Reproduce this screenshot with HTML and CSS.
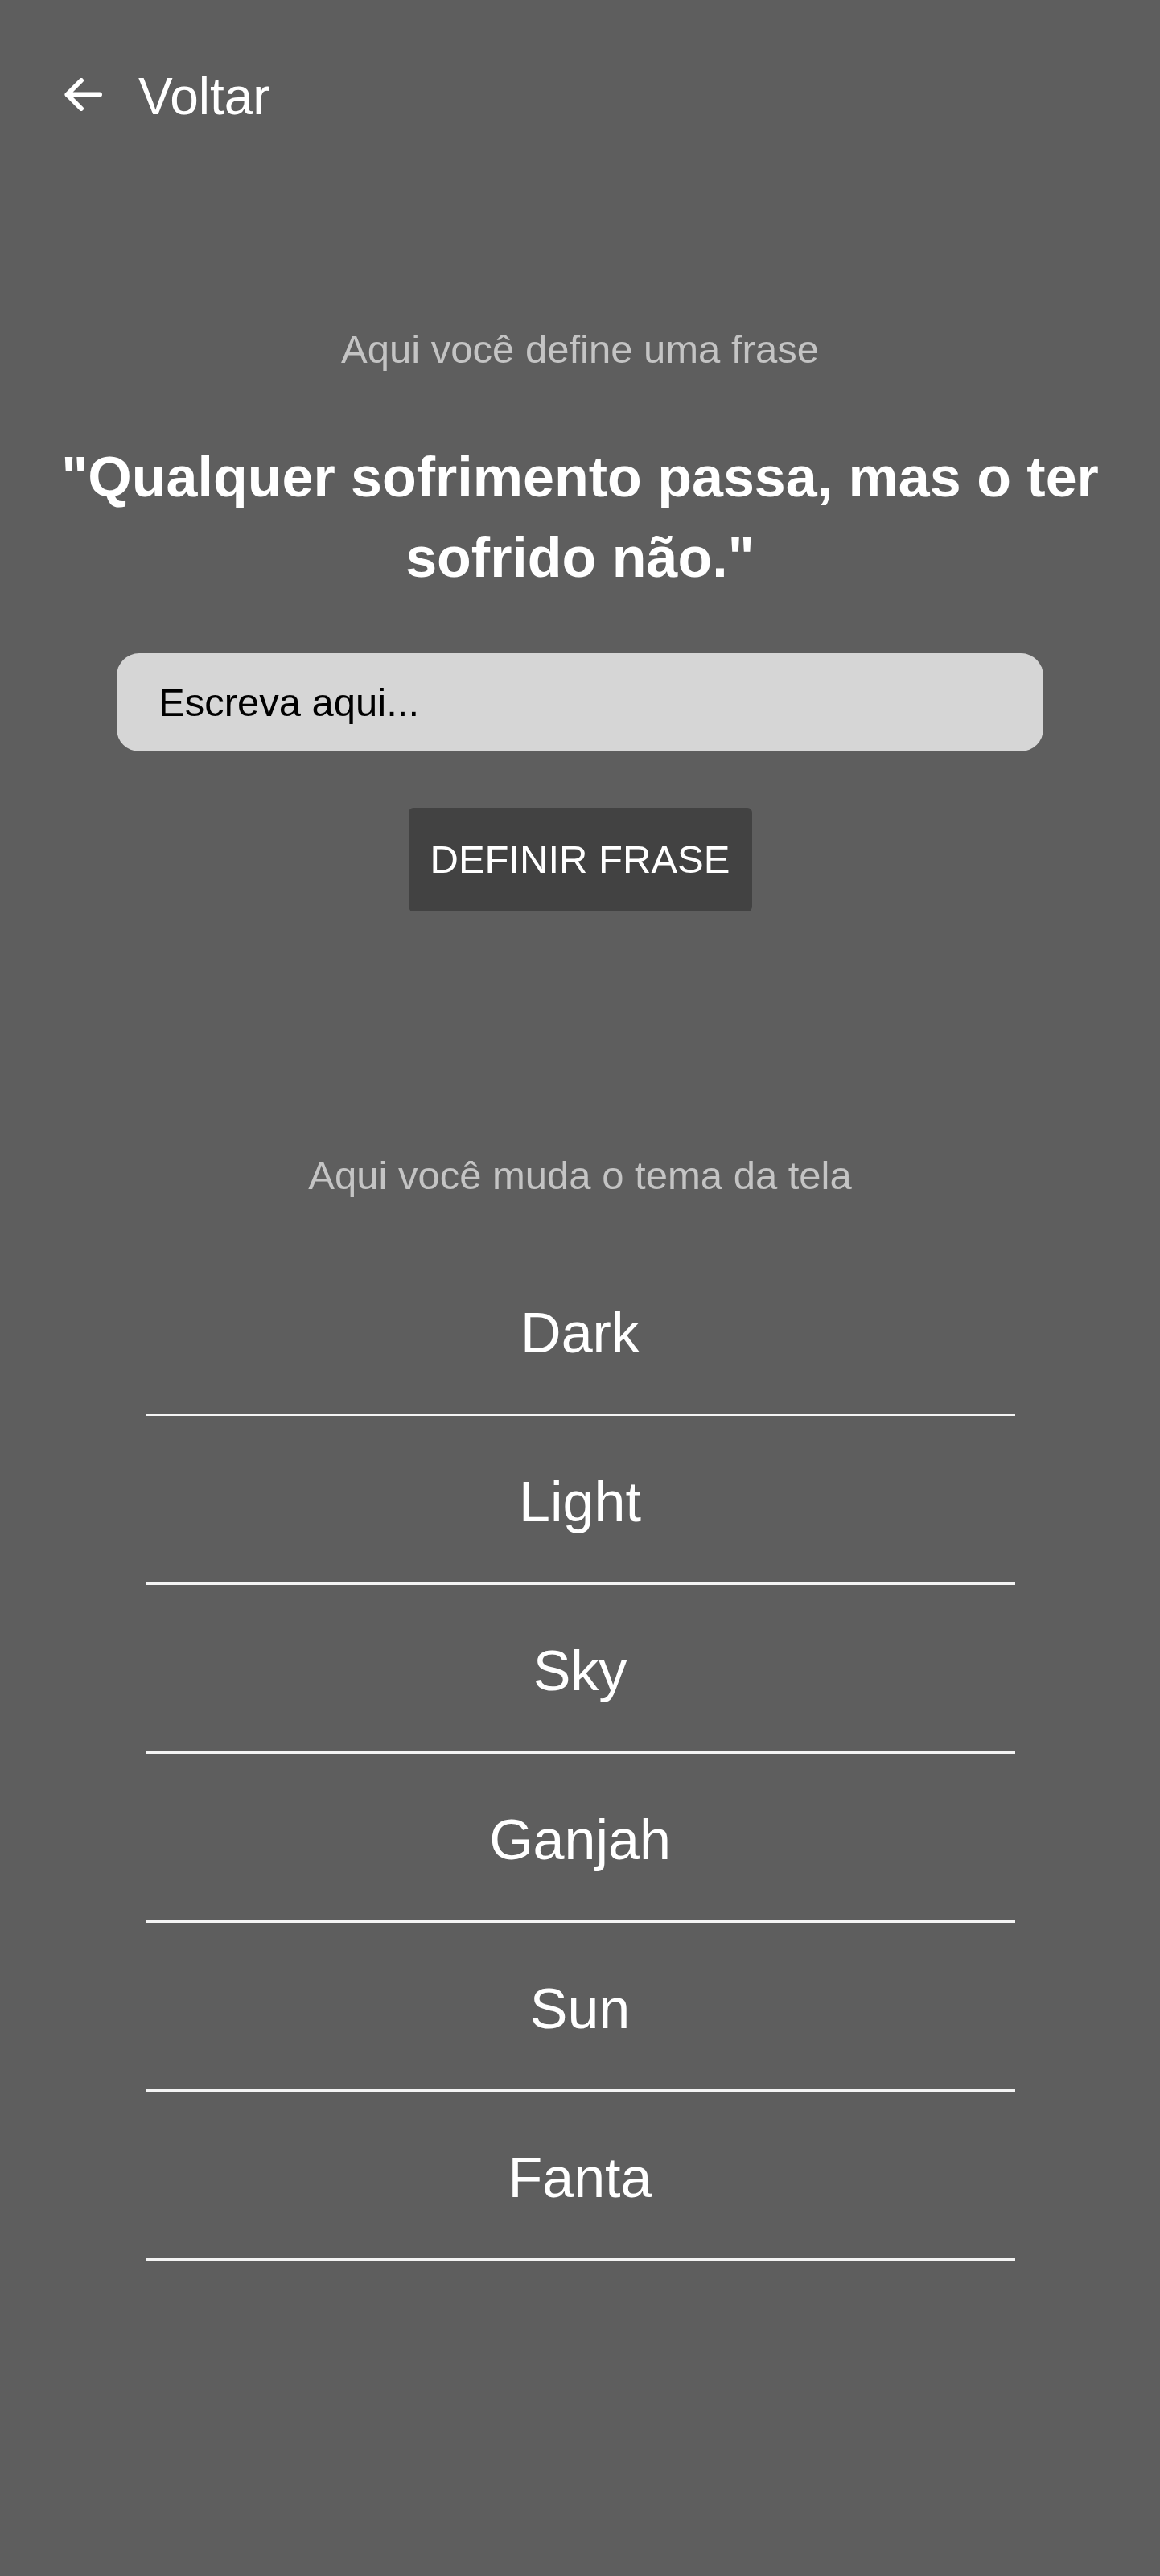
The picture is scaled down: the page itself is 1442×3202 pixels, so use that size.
FILE: index.html
```html
<!DOCTYPE html>
<html lang="pt">
<head>
<meta charset="utf-8">
<title>Configurações</title>
<link rel="stylesheet" href="styles.css">
</head>
<body>
<div class="screen">
  <header class="header">
    <svg class="back-icon" width="47" height="41" viewBox="0 0 47 41" aria-hidden="true">
      <path d="M44 20.5 H3.5 M3.5 20.5 L21 3 M3.5 20.5 L21 38" fill="none" stroke="#ffffff" stroke-width="6" stroke-linecap="round" stroke-linejoin="round"/>
    </svg>
    <span class="back-label">Voltar</span>
  </header>

  <section class="phrase-section">
    <p class="hint hint-phrase">Aqui você define uma frase</p>
    <h1 class="quote">"Qualquer sofrimento passa, mas o ter sofrido não."</h1>
    <input class="phrase-input" type="text" placeholder="Escreva aqui...">
    <button class="define-btn" type="button">DEFINIR FRASE</button>
  </section>

  <section class="theme-section">
    <p class="hint hint-theme">Aqui você muda o tema da tela</p>
    <ul class="theme-list">
      <li class="theme-item">Dark</li>
      <li class="theme-item">Light</li>
      <li class="theme-item">Sky</li>
      <li class="theme-item">Ganjah</li>
      <li class="theme-item">Sun</li>
      <li class="theme-item">Fanta</li>
    </ul>
  </section>
</div>
</body>
</html>
```

FILE: styles.css
```css
html, body {
  margin: 0;
  padding: 0;
  background: #5e5e5e;
}

body {
  font-family: "Liberation Sans", Arial, sans-serif;
  color: #ffffff;
  min-height: 3202px;
}

.screen {
  display: flex;
  flex-direction: column;
  align-items: stretch;
}

.header {
  display: flex;
  align-items: center;
  padding: 88px 0 0 80px;
  height: 64px;
}

.back-icon {
  display: block;
  margin-right: 45px;
  margin-bottom: 6px;
  flex: none;
}

.back-label {
  font-size: 64px;
  line-height: 64px;
  color: #ffffff;
}

.phrase-section {
  display: flex;
  flex-direction: column;
  align-items: center;
}

.hint {
  margin: 0;
  font-size: 49px;
  line-height: 56px;
  color: #c4c4c4;
  text-align: center;
}

.hint-phrase {
  margin-top: 254px;
}

.quote {
  margin: 81px 0 0;
  padding: 0 56px;
  font-size: 70px;
  line-height: 100px;
  font-weight: 700;
  text-align: center;
  color: #ffffff;
}

.phrase-input {
  margin-top: 69px;
  width: 1152px;
  height: 122px;
  box-sizing: border-box;
  border: none;
  outline: none;
  border-radius: 28px;
  background: #d6d6d6;
  padding: 0 0 0 52px;
  font-family: "Liberation Sans", Arial, sans-serif;
  font-size: 49px;
  color: #000000;
}

.phrase-input::placeholder {
  color: #000000;
  opacity: 1;
}

.define-btn {
  margin-top: 70px;
  height: 129px;
  width: 427px;
  padding: 0;
  border: none;
  border-radius: 6px;
  background: #424242;
  color: #ffffff;
  font-family: "Liberation Sans", Arial, sans-serif;
  font-size: 49px;
  line-height: 129px;
  text-align: center;
}

.theme-section {
  display: flex;
  flex-direction: column;
  align-items: center;
}

.hint-theme {
  margin-top: 300px;
}

.theme-list {
  list-style: none;
  margin: 61px 0 0;
  padding: 0;
  width: 1081px;
}

.theme-item {
  box-sizing: border-box;
  height: 210px;
  padding-top: 7px;
  border-bottom: 3px solid #f4f4f4;
  font-size: 70px;
  line-height: 200px;
  text-align: center;
  color: #ffffff;
}
```
